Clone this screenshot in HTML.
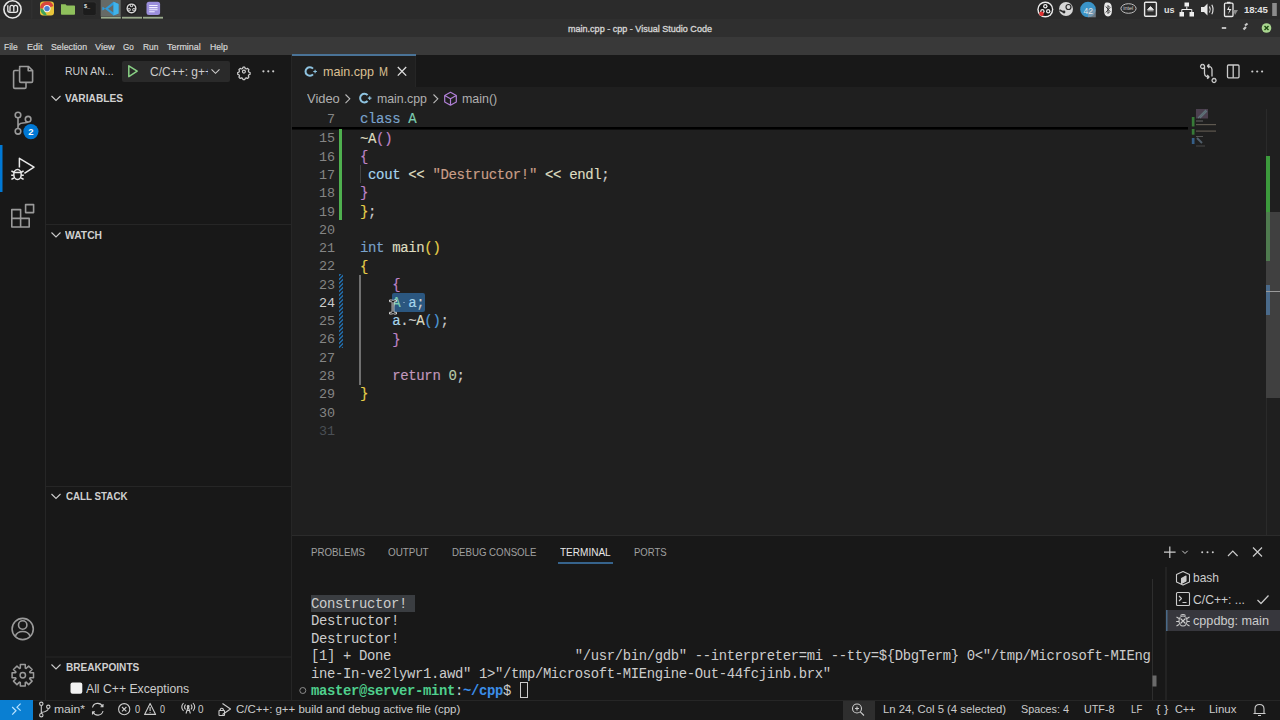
<!DOCTYPE html>
<html><head><meta charset="utf-8">
<style>
*{box-sizing:border-box;margin:0;padding:0}
html,body{width:1280px;height:720px;overflow:hidden;background:#1f1f1f;font-family:"Liberation Sans",sans-serif;color:#ccc;position:relative}
div,span,svg{position:absolute}
.t{white-space:pre;line-height:1}
#panel{left:0;top:0;width:1280px;height:19px;background:#2b2b2b}
#title{left:0;top:19px;width:1280px;height:18px;background:#2f2f2f}
#menu{left:0;top:37px;width:1280px;height:18px;background:#393939}
#act{left:0;top:55px;width:46px;height:645px;background:#181818;border-right:1px solid #262626}
#side{left:46px;top:55px;width:246px;height:645px;background:#181818;border-right:1px solid #262626}
#tabs{left:292px;top:55px;width:988px;height:32px;background:#181818}
#editor{left:292px;top:87px;width:988px;height:448px;background:#1f1f1f}
#term{left:292px;top:535px;width:988px;height:165px;background:#181818;border-top:1px solid #2b2b2b}
#status{left:0;top:700px;width:1280px;height:20px;background:#181818;border-top:1px solid #262626}
.mn{top:41px;font-size:9.6px;color:#dcdcdc}
.ln{z-index:3;width:40px;text-align:right;font-size:13.4px;color:#858585;font-family:"Liberation Mono",monospace;line-height:18.27px;height:18.27px;left:295px;white-space:pre}
.cl{z-index:3;margin-top:-0.8px;-webkit-text-stroke:0.15px currentColor;font-size:14px;letter-spacing:-0.36px;white-space:pre;font-family:"Liberation Mono",monospace;color:#cccccc;line-height:18.27px;height:18.27px;left:360px}
.cl span,.tl span{position:static}
.kw{color:#7aa3cc}.ty{color:#7ccdb2}.b1{color:#e6cf4a}.b2{color:#bf84c8}.b3{color:#4f9ad8}
.fn{color:#dedcc0}.str{color:#c99e88}.num{color:#b8cbaa}.vr{color:#a6d4ec}.ctl{color:#c298bd}
.hdr{font-weight:bold;color:#cccccc;left:65px}
.tl{font-size:13.9px;letter-spacing:-0.34px;white-space:pre;font-family:"Liberation Mono",monospace;color:#cccccc;line-height:17.5px;height:17.5px;left:311px}
.ptab{top:547px;font-size:9.7px;color:#9d9d9d}
.sb{top:704px;font-size:11.4px;color:#cccccc}
.hatch{background:repeating-linear-gradient(-45deg,#2068a0 0 1.4px,#1f2630 1.4px 2.8px)}</style></head><body>
<div id="panel"></div>
<div id="title"></div>
<span class="t" style="left:568.00px;top:24.14px;font-size:9.8px;color:#d4d4d4;transform:scaleX(0.9221);transform-origin:0 0;-webkit-text-stroke:0.35px #d4d4d4;">main.cpp - cpp - Visual Studio Code</span>
<div id="menu"></div>
<span class="t" style="left:4.20px;top:41.94px;font-size:9.8px;color:#d6d6d6;transform:scaleX(0.8620);transform-origin:0 0;-webkit-text-stroke:0.2px #d6d6d6;">File</span>
<span class="t" style="left:26.70px;top:41.94px;font-size:9.8px;color:#d6d6d6;transform:scaleX(0.9169);transform-origin:0 0;-webkit-text-stroke:0.2px #d6d6d6;">Edit</span>
<span class="t" style="left:50.60px;top:41.94px;font-size:9.8px;color:#d6d6d6;transform:scaleX(0.8952);transform-origin:0 0;-webkit-text-stroke:0.2px #d6d6d6;">Selection</span>
<span class="t" style="left:95.10px;top:41.94px;font-size:9.8px;color:#d6d6d6;transform:scaleX(0.9350);transform-origin:0 0;-webkit-text-stroke:0.2px #d6d6d6;">View</span>
<span class="t" style="left:123.40px;top:41.94px;font-size:9.8px;color:#d6d6d6;transform:scaleX(0.8255);transform-origin:0 0;-webkit-text-stroke:0.2px #d6d6d6;">Go</span>
<span class="t" style="left:142.60px;top:41.94px;font-size:9.8px;color:#d6d6d6;transform:scaleX(0.8619);transform-origin:0 0;-webkit-text-stroke:0.2px #d6d6d6;">Run</span>
<span class="t" style="left:167.00px;top:41.94px;font-size:9.8px;color:#d6d6d6;transform:scaleX(0.9111);transform-origin:0 0;-webkit-text-stroke:0.2px #d6d6d6;">Terminal</span>
<span class="t" style="left:209.70px;top:41.94px;font-size:9.8px;color:#d6d6d6;transform:scaleX(0.8839);transform-origin:0 0;-webkit-text-stroke:0.2px #d6d6d6;">Help</span>
<div id="act"></div><div id="side"></div><div id="tabs"></div><div id="editor"></div><div id="term"></div><div id="status"></div>
<div class="ln" style="top:110.66px">7</div>
<div class="cl" style="top:110.66px"><span class="kw">class</span> <span class="ty">A</span></div>
<div class="ln" style="top:130.47px">15</div>
<div class="cl" style="top:130.47px"><span class="fn">~A</span><span class="b2">()</span></div>
<div class="ln" style="top:148.74px">16</div>
<div class="cl" style="top:148.74px"><span class="b2">{</span></div>
<div class="ln" style="top:167.01px">17</div>
<div class="cl" style="top:167.01px"> <span class="vr">cout</span> <span class="fn">&lt;&lt;</span> <span class="str">"Destructor!"</span> <span class="fn">&lt;&lt;</span> <span class="fn">endl</span>;</div>
<div class="ln" style="top:185.28px">18</div>
<div class="cl" style="top:185.28px"><span class="b2">}</span></div>
<div class="ln" style="top:203.55px">19</div>
<div class="cl" style="top:203.55px"><span class="b1">}</span>;</div>
<div class="ln" style="top:221.82px">20</div>
<div class="ln" style="top:240.09px">21</div>
<div class="cl" style="top:240.09px"><span class="kw">int</span> <span class="fn">main</span><span class="b1">()</span></div>
<div class="ln" style="top:258.36px">22</div>
<div class="cl" style="top:258.36px"><span class="b1">{</span></div>
<div class="ln" style="top:276.63px">23</div>
<div class="cl" style="top:276.63px">    <span class="b2">{</span></div>
<div class="ln" style="top:294.90px;color:#cccccc">24</div>
<div class="cl" style="top:294.90px">    <span class="ty">A</span> <span class="vr">a</span>;</div>
<div class="ln" style="top:313.17px">25</div>
<div class="cl" style="top:313.17px">    <span class="vr">a</span>.~<span class="fn">A</span><span class="b3">()</span>;</div>
<div class="ln" style="top:331.44px">26</div>
<div class="cl" style="top:331.44px">    <span class="b2">}</span></div>
<div class="ln" style="top:349.71px">27</div>
<div class="ln" style="top:367.98px">28</div>
<div class="cl" style="top:367.98px">    <span class="ctl">return</span> <span class="num">0</span>;</div>
<div class="ln" style="top:386.25px">29</div>
<div class="cl" style="top:386.25px"><span class="b1">}</span></div>
<div class="ln" style="top:404.52px">30</div>
<div class="ln" style="top:422.79px;color:#4a4f55">31</div>
<span class="t" style="left:311.30px;top:547.13px;font-size:10.8px;color:#a0a0a0;transform:scaleX(0.9001);transform-origin:0 0;">PROBLEMS</span>
<span class="t" style="left:388.40px;top:547.13px;font-size:10.8px;color:#a0a0a0;transform:scaleX(0.9147);transform-origin:0 0;">OUTPUT</span>
<span class="t" style="left:452.00px;top:547.13px;font-size:10.8px;color:#a0a0a0;transform:scaleX(0.8967);transform-origin:0 0;">DEBUG CONSOLE</span>
<span class="t" style="left:560.00px;top:547.13px;font-size:10.8px;color:#e7e7e7;transform:scaleX(0.9287);transform-origin:0 0;">TERMINAL</span>
<span class="t" style="left:633.80px;top:547.13px;font-size:10.8px;color:#a0a0a0;transform:scaleX(0.8840);transform-origin:0 0;">PORTS</span>
<div style="left:311.2px;top:594.5px;width:104.3px;height:17.5px;background:#3a3d41"></div>
<div class="tl" style="top:595.75px">Constructor!</div>
<div class="tl" style="top:613.25px">Destructor!</div>
<div class="tl" style="top:630.75px">Destructor!</div>
<div class="tl" style="top:648.25px">[1] + Done                       "/usr/bin/gdb" --interpreter=mi --tty=${DbgTerm} 0&lt;"/tmp/Microsoft-MIEng</div>
<div class="tl" style="top:665.75px">ine-In-ve2lywr1.awd" 1&gt;"/tmp/Microsoft-MIEngine-Out-44fcjinb.brx"</div>
<div class="tl" style="top:683.25px"><span style="color:#4fcf8c;font-weight:bold">master@server-mint</span>:<span style="color:#3b8eea;font-weight:bold">~/cpp</span>$ </div>
<span class="t" style="left:65.00px;top:92.83px;font-size:11px;color:#d0d0d0;font-weight:bold;transform:scaleX(0.9242);transform-origin:0 0;">VARIABLES</span>
<span class="t" style="left:65.20px;top:229.88px;font-size:11px;color:#d0d0d0;font-weight:bold;transform:scaleX(0.9369);transform-origin:0 0;">WATCH</span>
<span class="t" style="left:65.75px;top:491.13px;font-size:11px;color:#d0d0d0;font-weight:bold;transform:scaleX(0.8882);transform-origin:0 0;">CALL STACK</span>
<span class="t" style="left:65.75px;top:661.63px;font-size:11px;color:#d0d0d0;font-weight:bold;transform:scaleX(0.9147);transform-origin:0 0;">BREAKPOINTS</span>
<span class="t" style="left:235.50px;top:703.93px;font-size:11.4px;color:#cccccc;transform:scaleX(1.0063);transform-origin:0 0;">C/C++: g++ build and debug active file (cpp)</span>
<svg style="left:0;top:0" width="1280" height="55" viewBox="0 0 1280 55">
<circle cx="12.5" cy="9.4" r="8.6" fill="none" stroke="#e8e8e8" stroke-width="1.6"/>
<path d="M7.8 5.2 V10.2 Q7.8 12.3 9.9 12.3 H15.6 Q17.6 12.3 17.6 10.2 V7.6 Q17.6 5.4 15.6 5.4 Q13.8 5.4 13.8 7.4 V11.4 M13.8 7.4 Q13.8 5.4 11.9 5.4 Q10 5.4 10 7.4 V11.4" fill="none" stroke="#e8e8e8" stroke-width="1.3"/>
<rect x="31.3" y="0" width="1" height="18.5" fill="#343434"/>
<rect x="40" y="1.6" width="14" height="14" rx="3" fill="#e8c53a"/>
<path d="M40 8.6 A7 7 0 0 1 53.5 6 L47 8.6 Z" fill="#d9473c"/>
<path d="M41 12 Q40 10 40.5 8 L44 10 L47 15.6 Q43 15.6 41 12Z" fill="#3fa45a"/>
<rect x="40" y="1.6" width="14" height="14" rx="3" fill="none"/>
<circle cx="47" cy="8.6" r="3.6" fill="#f5f5f5"/>
<circle cx="47" cy="8.6" r="2.7" fill="#4a7fd0"/>
<path d="M61 4.2 h4.5 l1.2 1.2 h7.5 q0.8 0 0.8 0.8 v7.8 q0 0.8 -0.8 0.8 h-12.4 q-0.8 0 -0.8 -0.8z" fill="#8fc05c"/>
<rect x="82.8" y="2" width="13.4" height="13.6" rx="2.2" fill="#1c1c1c" stroke="#3a3a3a" stroke-width="0.5"/>
<text x="84" y="8" font-family="Liberation Sans" font-weight="bold" font-size="5.5" fill="#e0e0e0">$_</text>
<rect x="100.7" y="0" width="20" height="16.5" fill="#666a66"/>
<path d="M113.5 1.8 L118.5 4 V13.4 L113.5 15.5 L105 8.8 L102.8 10.6 L102.3 10 V7.4 L102.8 6.8 L105 8.6 Z" fill="#2f9ad8"/>
<path d="M113.5 4.8 L108 8.7 L113.5 12.6 Z" fill="#666a66"/>
<path d="M113.5 1.8 L118.5 4 V13.4 L113.5 15.5 Z" fill="#40b4ea"/>
<circle cx="131.5" cy="8.4" r="6.5" fill="#1f1f1f"/>
<circle cx="131.5" cy="8.4" r="5" fill="#d8d8d8"/>
<circle cx="131.5" cy="8.4" r="3.6" fill="#1f1f1f"/>
<circle cx="131.5" cy="5.6" r="1.7" fill="#d8d8d8"/><circle cx="129.1" cy="9.8" r="1.7" fill="#d8d8d8"/><circle cx="133.9" cy="9.8" r="1.7" fill="#d8d8d8"/>
<circle cx="131.5" cy="5.6" r="0.8" fill="#1f1f1f"/><circle cx="129.1" cy="9.8" r="0.8" fill="#1f1f1f"/><circle cx="133.9" cy="9.8" r="0.8" fill="#1f1f1f"/>
<rect x="146.5" y="1.7" width="13.6" height="13.4" rx="2.5" fill="#9b8fdc"/>
<path d="M149.2 5.5 h8.4 M149.2 7.6 h8.4 M149.2 9.7 h8.4 M149.2 11.8 h5.5" stroke="#f0eeff" stroke-width="1.1"/>
<rect x="101" y="16.8" width="19.8" height="1.8" fill="#9aab8c"/>
<rect x="122" y="16.8" width="20" height="1.8" fill="#9aab8c"/>
<rect x="143" y="16.8" width="20" height="1.8" fill="#9aab8c"/>
<circle cx="1045.3" cy="9.5" r="8" fill="#ececec"/>
<circle cx="1045.3" cy="9.5" r="6.6" fill="#1a1a1a"/>
<circle cx="1045.3" cy="6.2" r="2.2" fill="#ececec"/><circle cx="1042.4" cy="11.2" r="2.2" fill="#ececec"/><circle cx="1048.2" cy="11.2" r="2.2" fill="#ececec"/>
<circle cx="1045.3" cy="6.2" r="1" fill="#1a1a1a"/><circle cx="1042.4" cy="11.2" r="1" fill="#1a1a1a"/><circle cx="1048.2" cy="11.2" r="1" fill="#1a1a1a"/>
<circle cx="1041.5" cy="13.8" r="2.3" fill="#e03030"/>
<circle cx="1066" cy="9" r="7" fill="#d6d6d6"/>
<circle cx="1068.5" cy="7" r="2.5" fill="none" stroke="#2b2b2b" stroke-width="1.2"/>
<path d="M1059.5 10 L1064.5 12.5" stroke="#2b2b2b" stroke-width="1.5"/><circle cx="1064" cy="12" r="1.4" fill="#2b2b2b"/>
<circle cx="1088" cy="9.5" r="7.8" fill="#3a94c8"/>
<path d="M1088 9.5 h7.8 v7.8 h-7.8z" fill="#8a9aa8" opacity="0.7"/>
<text x="1083.5" y="13.8" font-family="Liberation Sans" font-size="8.5" fill="#e8e8e8">42</text>
<path d="M1106 2.5 Q1104 2.5 1104 9.5 Q1104 16.5 1108 16.5 Q1112 16.5 1112 9.5 Q1112 2.5 1108 2.5Z" fill="#e8e8e8"/>
<path d="M1105.8 6.5 L1110 11.5 L1108 13.5 V5.5 L1110 7.5 L1105.8 12.5" stroke="#2b2b2b" stroke-width="0.9" fill="none"/>
<ellipse cx="1128.5" cy="8.5" rx="7.6" ry="4.8" fill="none" stroke="#cfcfcf" stroke-width="0.9"/>
<text x="1123.2" y="10.3" font-family="Liberation Sans" font-size="5.5" fill="#cfcfcf">intel</text>
<rect x="1144.6" y="2.3" width="11.8" height="14" rx="1" fill="none" stroke="#e8e8e8" stroke-width="1.4"/>
<path d="M1147.5 9.5 L1150.5 6.5 L1153.5 9.5Z M1147.5 10.8 h6" fill="#e8e8e8" stroke="#e8e8e8" stroke-width="0.8"/>
<text x="1164" y="12.6" font-family="Liberation Sans" font-weight="bold" font-size="9" fill="#e0e0e0">us</text>
<rect x="1184.5" y="2.5" width="4.5" height="4" fill="#eeeeee"/>
<rect x="1179.5" y="12" width="4.5" height="4.5" fill="#eeeeee"/><rect x="1189.5" y="12" width="4.5" height="4.5" fill="#eeeeee"/>
<path d="M1186.8 6.5 V9.5 M1181.8 12 V9.5 H1191.8 V12" stroke="#eeeeee" stroke-width="1" fill="none"/>
<path d="M1201 7 h3 l3.5 -3.5 v12 l-3.5 -3.5 h-3z" fill="#e8e8e8"/>
<path d="M1209.5 6.5 q1.5 3 0 6 M1211.8 4.8 q2.6 4.7 0 9.4" stroke="#e8e8e8" stroke-width="1.1" fill="none"/>
<rect x="1224.5" y="3.2" width="8.5" height="13.3" rx="1" fill="none" stroke="#e8e8e8" stroke-width="1.3"/>
<rect x="1227" y="1.8" width="3.5" height="1.5" fill="#e8e8e8"/>
<path d="M1229.5 5.5 L1227 10 h2.5 L1228 14.5 L1231.5 9 h-2.5z" fill="#e8e8e8"/>
<path d="M1233 10 L1238 10 L1235 15 Z" fill="#8a8a8a"/>
<text x="1244" y="13.4" font-family="Liberation Sans" font-weight="bold" font-size="9.6" fill="#e0e0e0" letter-spacing="-0.2">18:45</text>
<rect x="1272.2" y="3" width="4.6" height="13" fill="#8c8c8c"/>
<rect x="1221.8" y="27" width="4.4" height="2" fill="#bdbdbd"/>
<path d="M1243.5 29.5 L1246 27 M1245 25.5 L1247.5 23.5" stroke="#c8c8c8" stroke-width="2.2"/>
<circle cx="1266.5" cy="28" r="4.8" fill="#a9d68f"/>
<path d="M1264.5 26 L1268.5 30 M1268.5 26 L1264.5 30" stroke="#1e4a12" stroke-width="1.4"/>
</svg>
<svg style="left:0;top:55px" width="46" height="645" viewBox="0 55 46 645">
<rect x="0" y="145" width="2.5" height="47" fill="#0078d4"/>
<g fill="none" stroke="#9a9a9a" stroke-width="1.6" stroke-linejoin="round">
<path d="M18.8 70.5 H14.8 Q13.6 70.5 13.6 71.7 V87.2 Q13.6 88.4 14.8 88.4 H24.8 Q26 88.4 26 87.2 V82.8"/>
<path d="M19.6 66.5 H28.6 L32.6 70.6 V81.2 Q32.6 82.4 31.4 82.4 H20.8 Q19.6 82.4 19.6 81.2 V67.7 Q19.6 66.5 20.8 66.5Z"/>
<path d="M28.2 66.8 V70.8 H32.2"/>
<circle cx="18" cy="115" r="2.8"/><circle cx="28.1" cy="119.2" r="2.8"/><circle cx="18" cy="131.3" r="2.8"/>
<path d="M18 117.8 V128.5 M18 127 Q18 123.5 23 123 Q27.5 122.6 28.1 122"/>
<path d="M11.8 209.6 h8.8 v8.8 h-8.8z M11.8 218.4 h8.8 v8.6 h-8.8z M20.6 218.4 h8.6 v8.6 h-8.6z M25.6 204.6 h8 v8 h-8z"/>
</g>
<g fill="none" stroke="#e8e8e8" stroke-width="1.5" stroke-linejoin="round">
<path d="M19.4 167.5 V158.3 L34 167.2 L24.4 173.4"/>
<ellipse cx="17.5" cy="174.6" rx="3.7" ry="5"/>
<path d="M13.8 172.6 h7.4 M11.4 171 l2.5 1.2 M23.6 171 l-2.5 1.2 M11.2 175.3 h2.5 M23.8 175.3 h-2.5 M11.4 179.4 l2.5 -1.4 M23.6 179.4 l-2.5 -1.4"/>
</g>
<circle cx="30.9" cy="131.6" r="7.6" fill="#0078d4"/>
<text x="30.9" y="135" text-anchor="middle" font-family="Liberation Sans" font-weight="bold" font-size="9.5" fill="#ffffff">2</text>
<g fill="none" stroke="#9a9a9a" stroke-width="1.6">
<circle cx="22.7" cy="629" r="10.6"/>
<circle cx="22.7" cy="625" r="4.2"/>
<path d="M15.2 636.5 Q17 631.5 22.7 631.5 Q28.4 631.5 30.2 636.5"/>
</g>
<g fill="none" stroke="#9a9a9a" stroke-width="1.5" stroke-linejoin="round"><path d="M20.33 668.11 L20.33 664.58 L25.27 664.58 L25.27 668.11 L26.13 668.47 L28.63 665.97 L32.13 669.47 L29.63 671.97 L29.99 672.83 L33.52 672.83 L33.52 677.77 L29.99 677.77 L29.63 678.63 L32.13 681.13 L28.63 684.63 L26.13 682.13 L25.27 682.49 L25.27 686.02 L20.33 686.02 L20.33 682.49 L19.47 682.13 L16.97 684.63 L13.47 681.13 L15.97 678.63 L15.61 677.77 L12.08 677.77 L12.08 672.83 L15.61 672.83 L15.97 671.97 L13.47 669.47 L16.97 665.97 L19.47 668.47Z"/><circle cx="22.8" cy="675.3" r="2.7"/></g>
</svg>
<span class="t" style="left:65.40px;top:66.43px;font-size:11.2px;color:#cccccc;transform:scaleX(0.9413);transform-origin:0 0;">RUN AN...</span>
<div style="left:122px;top:61px;width:108px;height:21px;background:#2a2a2a;border-radius:2px"></div>
<span class="t" style="left:149.50px;top:65.82px;font-size:12.4px;color:#cccccc;transform:scaleX(0.9671);transform-origin:0 0;">C/C++: g++</span>
<div style="left:208.3px;top:61px;width:4px;height:21px;background:#2a2a2a"></div>
<svg style="left:46px;top:55px" width="246" height="645" viewBox="46 55 246 645">
<path d="M128.8 65.8 L137.2 71.2 L128.8 76.6 Z" fill="none" stroke="#89d185" stroke-width="1.5" stroke-linejoin="round"/>
<path d="M211.5 69.3 L215.5 73.3 L219.5 69.3" fill="none" stroke="#cccccc" stroke-width="1.1"/>
<g transform="translate(243.9 71.6) scale(0.7)" fill="none" stroke="#cccccc" stroke-width="1.7" stroke-linejoin="round">
<path d="M-1.3 -6.3 h2.6 l0.6 1.9 l1.6 0.7 l1.8 -0.9 l1.9 1.9 l-0.9 1.8 l0.7 1.6 l1.9 0.6 v2.6 l-1.9 0.6 l-0.7 1.6 l0.9 1.8 l-1.9 1.9 l-1.8 -0.9 l-1.6 0.7 l-0.6 1.9 h-2.6 l-0.6 -1.9 l-1.6 -0.7 l-1.8 0.9 l-1.9 -1.9 l0.9 -1.8 l-0.7 -1.6 l-1.9 -0.6 v-2.6 l1.9 -0.6 l0.7 -1.6 l-0.9 -1.8 l1.9 -1.9 l1.8 0.9 l1.6 -0.7z"/>
<circle cx="0" cy="0" r="2.1"/>
</g>
<circle cx="263.4" cy="71.3" r="1.1" fill="#cccccc"/><circle cx="268.3" cy="71.3" r="1.1" fill="#cccccc"/><circle cx="273.2" cy="71.3" r="1.1" fill="#cccccc"/>
<path d="M51.5 96 L56 100.5 L60.5 96" fill="none" stroke="#cccccc" stroke-width="1.1"/>
<path d="M51.5 232.5 L56 237 L60.5 232.5" fill="none" stroke="#cccccc" stroke-width="1.1"/>
<path d="M51.5 494 L56 498.5 L60.5 494" fill="none" stroke="#cccccc" stroke-width="1.1"/>
<path d="M51.5 664.5 L56 669 L60.5 664.5" fill="none" stroke="#cccccc" stroke-width="1.1"/>
<rect x="46" y="224" width="245" height="1" fill="#262626"/>
<rect x="46" y="486" width="245" height="1" fill="#262626"/>
<rect x="46" y="656.5" width="245" height="1" fill="#262626"/>
<rect x="70.5" y="682.5" width="11.8" height="11.2" rx="2" fill="#f2f2f2"/>
</svg>
<span class="t" style="left:85.75px;top:682.52px;font-size:12.4px;color:#cccccc;transform:scaleX(0.9854);transform-origin:0 0;">All C++ Exceptions</span>
<div style="z-index:2;left:292px;top:54px;width:124px;height:2px;background:#4a7397"></div>
<div style="left:292px;top:55px;width:124px;height:32px;background:#1f1f1f;border-right:1px solid #252525"></div>
<span class="t" style="left:322.60px;top:65.52px;font-size:12.8px;color:#dcc093;transform:scaleX(0.9794);transform-origin:0 0;">main.cpp</span>
<span class="t" style="left:379.00px;top:65.72px;font-size:12.4px;color:#dcc093;transform:scaleX(0.8692);transform-origin:0 0;">M</span>
<svg style="left:292px;top:55px" width="988" height="55" viewBox="292 55 988 55">
<path d="M397.8 67 L406.2 75.6 M406.2 67 L397.8 75.6" stroke="#e0e0e0" stroke-width="1.3"/>
<g fill="none" stroke="#8ec3e0" stroke-width="2"><path d="M313 68.6 A4.3 4.3 0 1 0 313 74.4"/></g>
<path d="M313.3 71.5 h3.6 M315.1 69.7 v3.6" stroke="#8ec3e0" stroke-width="1.1"/>
<g fill="none" stroke="#8ec3e0" stroke-width="2"><path d="M367.6 95.2 A4.3 4.3 0 1 0 367.6 101"/></g>
<path d="M367.9 98.1 h3.6 M369.7 96.3 v3.6" stroke="#8ec3e0" stroke-width="1.1"/>
<path d="M345.5 94.5 L349.8 98.8 L345.5 103.1 M433.5 94.5 L437.8 98.8 L433.5 103.1" fill="none" stroke="#bbbbbb" stroke-width="1.1"/>
<g fill="none" stroke="#b180d7" stroke-width="1.2" stroke-linejoin="round">
<path d="M450.5 92.3 L456.3 95.5 V102 L450.5 105.2 L444.7 102 V95.5 Z M444.7 95.5 L450.5 98.7 L456.3 95.5 M450.5 98.7 V105.2"/>
</g>
<g fill="none" stroke="#cccccc" stroke-width="1.3" stroke-linejoin="round">
<path d="M1202.5 64.5 a2 2 0 1 0 0.1 0 M1204.5 66.5 v7 q0 2 2 3 l2.5 1.5 M1207.2 75 l1.8 2 l-1.8 1.8 M1214 78.5 a2 2 0 1 0 0.1 0 M1212 76.5 v-7 q0 -2 -2 -3 l-2.5 -1.5 M1209.3 68 l-1.8 -2 l1.8 -1.8"/>
<rect x="1227.5" y="65" width="11.5" height="12.8" rx="1"/>
<path d="M1233.2 65 V77.8"/>
</g>
<circle cx="1252.3" cy="71.5" r="1.1" fill="#cccccc"/><circle cx="1257.2" cy="71.5" r="1.1" fill="#cccccc"/><circle cx="1262.1" cy="71.5" r="1.1" fill="#cccccc"/>
</svg>
<span class="t" style="left:307.00px;top:92.42px;font-size:13px;color:#b0b0b0;transform:scaleX(0.9933);transform-origin:0 0;">Video</span>
<span class="t" style="left:377.00px;top:92.42px;font-size:13px;color:#b0b0b0;transform:scaleX(0.9473);transform-origin:0 0;">main.cpp</span>
<span class="t" style="left:461.80px;top:92.42px;font-size:13px;color:#b0b0b0;transform:scaleX(0.9551);transform-origin:0 0;">main()</span>
<div style="left:292px;top:127px;width:896px;height:2.5px;background:linear-gradient(#000 0,#000 60%,rgba(0,0,0,0.3))"></div>
<div style="left:338.8px;top:128.8px;width:3.2px;height:91px;background:#4fb04f"></div>
<div class="hatch" style="left:338.5px;top:273.5px;width:4.5px;height:74.5px"></div>
<div style="left:359.5px;top:165px;width:1px;height:18.3px;background:#404040"></div>
<div style="left:359.3px;top:275px;width:1.6px;height:109.5px;background:#707070"></div>
<div style="left:392px;top:293.3px;width:33px;height:18.4px;background:#2b5780;border-radius:2px"></div>
<div style="z-index:4;left:403.3px;top:301.8px;width:1.6px;height:1.6px;background:#7a98b8;border-radius:1px"></div>
<svg style="left:384px;top:295px;z-index:5" width="18" height="24" viewBox="384 295 18 24">
<path d="M389.5 300 h2.2 q0.9 0 1.3 0.7 q0.4 -0.7 1.3 -0.7 h2.2 v1.7 h-1.7 q-0.9 0 -0.9 0.9 v8.8 q0 0.9 0.9 0.9 h1.7 v1.7 h-2.2 q-0.9 0 -1.3 -0.7 q-0.4 0.7 -1.3 0.7 h-2.2 v-1.7 h1.7 q0.9 0 0.9 -0.9 v-8.8 q0 -0.9 -0.9 -0.9 h-1.7z" fill="#151515" stroke="#e0e0e0" stroke-width="0.9"/>
</svg>
<svg style="left:1188px;top:100px;opacity:0.85" width="40" height="60" viewBox="1188 100 40 60">
<rect x="1196" y="109" width="12" height="9.5" fill="#5a4a5e" opacity="0.9"/>
<path d="M1198 118 L1206 110 M1200 118 L1207 111" stroke="#6a8088" stroke-width="1.2"/>
<rect x="1191.8" y="117" width="2.7" height="9.5" fill="#3c8a3c"/>
<rect x="1191.8" y="129" width="2.7" height="5.7" fill="#3c8a3c"/>
<rect x="1191.8" y="138" width="2.7" height="6" fill="#3a6a9a"/>
<rect x="1196" y="120.5" width="7" height="1" fill="#707070"/>
<rect x="1196" y="124" width="20" height="1.2" fill="#6a6258"/>
<rect x="1196" y="130.5" width="20" height="1.2" fill="#6a6258"/>
<rect x="1196" y="136" width="7" height="1" fill="#606060"/>
<path d="M1197 138 L1202 143" stroke="#5a6a78" stroke-width="2"/>
<rect x="1196" y="145.5" width="9" height="1" fill="#505050"/>
</svg>
<div style="left:1265.5px;top:109px;width:1px;height:426px;background:#2a2a2a"></div>
<div style="left:1266px;top:212px;width:14px;height:185.5px;background:#404040"></div>
<div style="left:1266px;top:155.5px;width:4px;height:56.5px;background:#3c9a3c"></div>
<div style="left:1266px;top:212px;width:4px;height:48.5px;background:#4f7a4f"></div>
<div style="left:1266px;top:285px;width:4px;height:30px;background:#4a6a8a"></div>
<div style="left:1266px;top:291px;width:14px;height:1px;background:#9a9a9a"></div>
<div style="left:558px;top:562px;width:55px;height:1.6px;background:#36638c"></div>
<div style="left:519.5px;top:682px;width:8.5px;height:16px;border:1px solid #cccccc"></div>
<svg style="left:292px;top:537px" width="988" height="163" viewBox="292 537 988 163">
<circle cx="302.8" cy="690.5" r="3" fill="none" stroke="#8a8a8a" stroke-width="1"/>
<path d="M1169.8 546.5 V558 M1164 552.2 H1175.6" stroke="#cccccc" stroke-width="1.2"/>
<path d="M1182.3 550.8 L1185 553.5 L1187.7 550.8" fill="none" stroke="#cccccc" stroke-width="1"/>
<circle cx="1202.2" cy="552.2" r="1" fill="#cccccc"/><circle cx="1207.5" cy="552.2" r="1" fill="#cccccc"/><circle cx="1212.8" cy="552.2" r="1" fill="#cccccc"/>
<path d="M1228 556 L1232.8 551.2 L1237.6 556" fill="none" stroke="#cccccc" stroke-width="1.2"/>
<path d="M1253 547.5 L1262 556.5 M1262 547.5 L1253 556.5" stroke="#cccccc" stroke-width="1.2"/>
<rect x="1165.5" y="567" width="1" height="133" fill="#2e2e2e"/>
<rect x="1152" y="579" width="1" height="121" fill="#2e2e2e"/>
<rect x="1152.5" y="675.5" width="4" height="11" fill="#6a6a6a"/>
<rect x="1166" y="610" width="114" height="21" fill="#37373d"/>
<rect x="1166" y="610" width="1.5" height="21" fill="#4a6a88"/>
<g fill="none" stroke="#cccccc" stroke-width="1.1" stroke-linejoin="round">
<path d="M1183 571.5 L1189.5 574.5 V582 L1183 585 L1176.5 582 V574.5 Z"/>
<path d="M1181.5 583.5 V578.5 L1186 576 V581Z" fill="#cccccc"/>
<rect x="1176.5" y="592.5" width="13" height="13" rx="1"/>
<path d="M1179 596 L1181.5 598.5 L1179 601 M1182.5 602.5 H1186.5"/>
<path d="M1257.5 600 L1261 603.5 L1268.5 595.5" stroke-width="1.2"/>
<ellipse cx="1183" cy="621" rx="4" ry="5"/>
<path d="M1180.5 618.5 l5 5 M1185.5 618.5 l-5 5 M1176.5 617 l2.5 1.5 M1189.5 617 l-2.5 1.5 M1176.2 621.5 h2.8 M1189.8 621.5 h-2.8 M1176.5 626 l2.5 -1.5 M1189.5 626 l-2.5 -1.5 M1180.5 615.5 q2.5 -2 5 0"/>
</g>
</svg>
<span class="t" style="left:1193.00px;top:572.32px;font-size:12.6px;color:#cccccc;transform:scaleX(0.9509);transform-origin:0 0;">bash</span>
<span class="t" style="left:1193.00px;top:593.72px;font-size:12.6px;color:#cccccc;transform:scaleX(0.9642);transform-origin:0 0;">C/C++: ...</span>
<span class="t" style="left:1193.00px;top:614.82px;font-size:12.6px;color:#cccccc;transform:scaleX(1.0045);transform-origin:0 0;">cppdbg: main</span>
<div style="left:0;top:700px;width:33px;height:20px;background:#0a7fd2"></div>
<div style="left:843px;top:701px;width:31.5px;height:19px;background:#2e2e2e"></div>
<svg style="left:0;top:700px" width="1280" height="20" viewBox="0 700 1280 20">
<path d="M12.2 707 L16 710.7 L12.2 714.6 M20.6 703.6 L17 707.2 L20.6 710.6" fill="none" stroke="#b8e2ff" stroke-width="1.2"/>
<g fill="none" stroke="#cccccc" stroke-width="1.1" stroke-linejoin="round">
<circle cx="41.3" cy="703.8" r="1.7"/><circle cx="48.3" cy="706.8" r="1.7"/><circle cx="41.3" cy="715.2" r="1.7"/>
<path d="M41.3 705.5 V713.5 M48.3 708.5 Q48.3 711.5 41.3 712.5"/>
<path d="M92.5 707.5 A5.3 5.3 0 0 1 102.5 706.5 M103 711 A5.3 5.3 0 0 1 93 712 M100.5 706.7 H103 V704 M95 711.8 H92.5 V714.5"/>
<circle cx="124.2" cy="709.2" r="5.6"/><path d="M122 707 L126.4 711.4 M126.4 707 L122 711.4"/>
<path d="M150.1 703.4 L155.6 714.4 H144.6 Z M150.1 707 V711 M150.1 712.3 V713"/>
<path d="M186 713.5 L188.2 706.5 L190.4 713.5 M187 710.5 h2.4 M185.5 704.5 q-2 2.5 0 5 M191 704.5 q2 2.5 0 5 M183.5 703 q-3.5 4 0 8 M193 703 q3.5 4 0 8"/>
<circle cx="188.2" cy="706.5" r="0.9"/>
<path d="M222.5 703.5 L230.5 709 L222.5 714.5"/>
<rect x="219" y="710.5" width="5.5" height="5" rx="0.5"/><path d="M220.3 710.5 v-1.3 q1.5 -2 3 0 v1.3"/>
<circle cx="857" cy="708.5" r="4.5"/><path d="M860.3 711.8 L864 715.5 M855 708.5 h4 M857 706.5 v4"/>
<path d="M1253.5 713.5 H1265.5 M1255 713.5 V709 Q1255 704.5 1259.5 704.5 Q1264 704.5 1264 709 V713.5 M1258 715.5 h3"/>
</g>
</svg>
<span class="t" style="left:54.40px;top:703.93px;font-size:11.4px;color:#cccccc;transform:scaleX(1.0643);transform-origin:0 0;">main*</span>
<span class="t" style="left:134.70px;top:703.93px;font-size:11.4px;color:#cccccc;transform:scaleX(0.8061);transform-origin:0 0;">0</span>
<span class="t" style="left:160.00px;top:703.93px;font-size:11.4px;color:#cccccc;transform:scaleX(0.7903);transform-origin:0 0;">0</span>
<span class="t" style="left:198.00px;top:703.93px;font-size:11.4px;color:#cccccc;transform:scaleX(0.8693);transform-origin:0 0;">0</span>
<span class="t" style="left:882.80px;top:703.93px;font-size:11.4px;color:#cccccc;transform:scaleX(0.9919);transform-origin:0 0;">Ln 24, Col 5 (4 selected)</span>
<span class="t" style="left:1021.00px;top:703.93px;font-size:11.4px;color:#cccccc;transform:scaleX(0.9473);transform-origin:0 0;">Spaces: 4</span>
<span class="t" style="left:1084.00px;top:703.93px;font-size:11.4px;color:#cccccc;transform:scaleX(0.9437);transform-origin:0 0;">UTF-8</span>
<span class="t" style="left:1130.70px;top:703.93px;font-size:11.4px;color:#cccccc;transform:scaleX(0.8508);transform-origin:0 0;">LF</span>
<span class="t" style="left:1156.00px;top:703.93px;font-size:11.4px;color:#cccccc;transform:scaleX(1.1603);transform-origin:0 0;">{ }</span>
<span class="t" style="left:1175.40px;top:703.93px;font-size:11.4px;color:#cccccc;transform:scaleX(0.9468);transform-origin:0 0;">C++</span>
<span class="t" style="left:1209.00px;top:703.93px;font-size:11.4px;color:#cccccc;transform:scaleX(1.0057);transform-origin:0 0;">Linux</span>
</body></html>
